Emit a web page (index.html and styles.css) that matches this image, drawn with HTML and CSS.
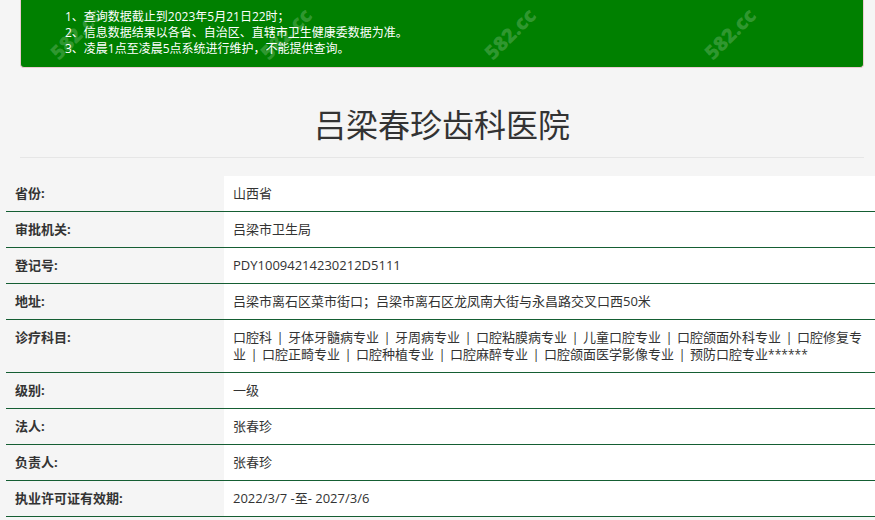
FILE: index.html
```html
<!DOCTYPE html>
<html lang="zh-CN">
<head>
<meta charset="utf-8">
<title>吕梁春珍齿科医院</title>
<link rel="stylesheet" href="styles.css">
</head>
<body>
<div class="notice">
  <ul class="notice-list">
    <li>1、查询数据截止到2023年5月21日22时；</li>
    <li>2、信息数据结果以各省、自治区、直辖市卫生健康委数据为准。</li>
    <li>3、凌晨1点至凌晨5点系统进行维护，不能提供查询。</li>
  </ul>
  <span class="wm wm1">582.cc</span>
  <span class="wm wm2">582.cc</span>
  <span class="wm wm3">582.cc</span>
  <span class="wm wm4">582.cc</span>
</div>
<div class="title-wrap">
  <h1 class="title">吕梁春珍齿科医院</h1>
</div>
<div class="info">
  <div class="row"><div class="label">省份:</div><div class="value">山西省</div></div>
  <div class="row"><div class="label">审批机关:</div><div class="value">吕梁市卫生局</div></div>
  <div class="row"><div class="label">登记号:</div><div class="value">PDY10094214230212D5111</div></div>
  <div class="row"><div class="label">地址:</div><div class="value">吕梁市离石区菜市街口；吕梁市离石区龙凤南大街与永昌路交叉口西50米</div></div>
  <div class="row"><div class="label">诊疗科目:</div><div class="value">口腔科<span class="sep">|</span>牙体牙髓病专业<span class="sep">|</span>牙周病专业<span class="sep">|</span>口腔粘膜病专业<span class="sep">|</span>儿童口腔专业<span class="sep">|</span>口腔颌面外科专业<span class="sep">|</span>口腔修复专业<span class="sep">|</span>口腔正畸专业<span class="sep">|</span>口腔种植专业<span class="sep">|</span>口腔麻醉专业<span class="sep">|</span>口腔颌面医学影像专业<span class="sep">|</span>预防口腔专业<span class="stars">******</span></div></div>
  <div class="row"><div class="label">级别:</div><div class="value">一级</div></div>
  <div class="row"><div class="label">法人:</div><div class="value">张春珍</div></div>
  <div class="row"><div class="label">负责人:</div><div class="value">张春珍</div></div>
  <div class="row"><div class="label">执业许可证有效期:</div><div class="value">2022/3/7 -至- 2027/3/6</div></div>
</div>
</body>
</html>
```
FILE: styles.css
```css
html, body {
  margin: 0;
  padding: 0;
}
body {
  background: #f5f5f5;
  font-family: "Open Sans", "Noto Sans CJK SC", sans-serif;
  color: #333;
  font-size: 13px;
  overflow: hidden;
}
.notice {
  position: relative;
  margin: 0 10px 0 20px;
  width: 844px;
  background: #008000;
  border: 1px solid #ebccd1;
  border-top: none;
  border-radius: 0 0 4px 4px;
  padding: 9px 0 10px 44px;
  box-sizing: border-box;
  height: 68px;
  color: #fff;
  font-size: 12px;
  line-height: 16px;
}
.notice-list {
  list-style: none;
  margin: 0;
  padding: 0;
  position: relative;
  z-index: 1;
}
.wm {
  position: absolute;
  font-family: "Open Sans", sans-serif;
  font-weight: 800;
  font-size: 20px;
  color: rgba(255, 255, 255, 0.2);
  transform: rotate(-45deg);
  white-space: nowrap;
  line-height: 20px;
  top: 24px;
}
.wm1 { left: 24px; }
.wm2 { left: 234px; }
.wm3 { left: 458px; }
.wm4 { left: 678px; }
.title-wrap {
  margin: 0 11px 0 20px;
  border-bottom: 1px solid #e6e6e6;
  padding: 35px 0 14px;
}
.title {
  margin: 0;
  text-align: center;
  font-size: 32px;
  line-height: 40px;
  font-weight: 400;
  color: #333;
  font-family: "Noto Sans CJK SC", sans-serif;
}
.info {
  margin: 18px 0 0 6px;
  width: 872px;
}
.row {
  display: grid;
  grid-template-columns: 218px 1fr;
  border-bottom: 1px solid #155e33;
}
.label {
  padding: 9px 9px;
  font-weight: 700;
  color: #333;
  line-height: 17px;
}
.value {
  background: #fff;
  padding: 9px 9px;
  line-height: 17px;
  color: #333;
}
.sep {
  display: inline-block;
  width: 16px;
  text-align: center;
  color: #333;
}
.stars {
  font-size: 12px;
}
```
